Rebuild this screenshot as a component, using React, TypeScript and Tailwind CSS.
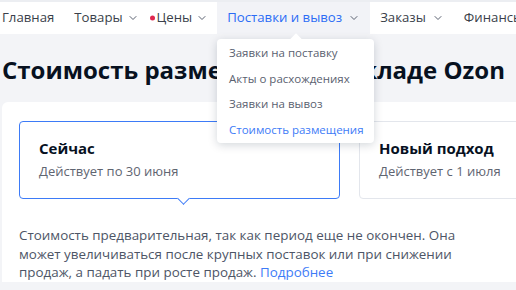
import { ChevronDown } from 'lucide-react';

const navItems = [
  { label: 'Главная', pad: 'pl-[2px] pr-[11px]' },
  { label: 'Товары', chevron: true, pad: 'px-[9px] gap-[4px]' },
  { label: 'Цены', chevron: true, dot: true, pad: 'px-[9px] gap-[4px]' },
  { label: 'Поставки и вывоз', chevron: true, active: true, pad: 'px-[10px] gap-[6px]' },
  { label: 'Заказы', chevron: true, pad: 'px-[10px] gap-[6px]' },
  { label: 'Финансы', chevron: true, pad: 'px-[10px] gap-[6px]' },
];

const menuItems = ['Заявки на поставку', 'Акты о расхождениях', 'Заявки на вывоз', 'Стоимость размещения'];

function NavBar() {
  return (
    <nav className="flex h-[34px] items-stretch border-t-2 border-[#eceef2] bg-white whitespace-nowrap">
      {navItems.map((item) => (
        <div
          key={item.label}
          className={`flex items-center text-[13.2px] ${item.pad} ${
            item.active ? 'bg-[#f2f3f7] text-[#2b6cf5]' : 'text-[#3a3f4a]'
          }`}
        >
          <span className="relative">
            {item.dot && (
              <span className="absolute -left-[7px] top-1/2 h-[5px] w-[5px] -translate-y-1/2 rounded-full bg-[#e0284f]" />
            )}
            {item.label}
          </span>
          {item.chevron && <ChevronDown size={12} strokeWidth={2} className="text-[#5a6170]" />}
        </div>
      ))}
    </nav>
  );
}

function Dropdown() {
  return (
    <div className="absolute left-[217px] top-[39px] w-[157px] rounded-[4px] bg-white py-[1px] shadow-[0_2px_10px_rgba(0,26,52,0.18)]">
      <div className="absolute -top-[4px] left-[75px] h-[8px] w-[8px] rotate-45 bg-white" />
      {menuItems.map((m, i) => (
        <div
          key={m}
          className={`relative h-[25.5px] px-[12px] text-[11.5px] leading-[25.5px] whitespace-nowrap ${
            i === menuItems.length - 1 ? 'text-[#3d7bf7]' : 'text-[#5a6170]'
          }`}
        >
          {m}
        </div>
      ))}
    </div>
  );
}

function PeriodCard({ title, sub, active }: { title: string; sub: string; active?: boolean }) {
  return (
    <div
      className={`relative h-[78px] w-[321px] shrink-0 rounded-[4px] border px-[19px] pt-[15px] ${
        active ? 'border-[#3d7bf7]' : 'border-[#e3e6ec]'
      }`}
    >
      <div className="text-[15px] font-bold leading-[22px] text-[#07111f] whitespace-nowrap">{title}</div>
      <div className="mt-[3px] text-[13px] leading-[18px] text-[#5f6571] whitespace-nowrap">{sub}</div>
      {active && (
        <div className="absolute -bottom-[5px] left-[159px] h-[9px] w-[9px] rotate-45 border-b border-r border-[#3d7bf7] bg-white" />
      )}
    </div>
  );
}

export default function App() {
  return (
    <div
      className="relative h-[290px] w-[516px] overflow-hidden bg-[#f3f4f7]"
      style={{ fontFamily: '"Open Sans", "Noto Sans", sans-serif' }}
    >
      <NavBar />
      <h1 className="pl-[2px] pt-[19px] text-[24px] font-bold leading-[34px] text-[#07111f] whitespace-nowrap">
        Стоимость размещения на складе Ozon
      </h1>
      <div className="ml-[2px] mt-[15px] rounded-tl-[6px] bg-white pl-[17px] pt-[19px]">
        <div className="flex gap-[19px]">
          <PeriodCard title="Сейчас" sub="Действует по 30 июня" active />
          <PeriodCard title="Новый подход" sub="Действует с 1 июля" />
        </div>
        <p className="mt-[27px] w-[460px] text-[13.4px] leading-[18.5px] text-[#4d5566]">
          Стоимость предварительная, так как период еще не окончен. Она может увеличиваться после крупных поставок или при снижении продаж, а падать при росте продаж.{' '}
          <span className="text-[#3d7bf7]">Подробнее</span>
        </p>
      </div>
      <Dropdown />
    </div>
  );
}
